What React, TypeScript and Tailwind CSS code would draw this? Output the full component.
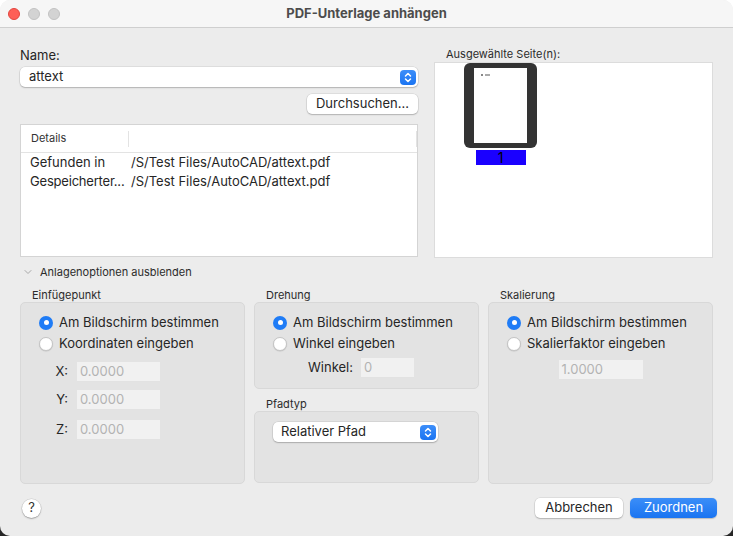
import type { ReactNode } from 'react';

const font = { fontFamily: 'Inter, "Liberation Sans", sans-serif' };

function Stepper() {
  return (
    <span className="flex h-[15px] w-[16px] items-center justify-center rounded-[4px] bg-[linear-gradient(#3d8ef9,#1a74f2)]">
      <svg width="8" height="11" viewBox="0 0 8 11" fill="none" stroke="white" strokeWidth="1.5" strokeLinecap="round" strokeLinejoin="round">
        <path d="M1.5 4 L4 1.5 L6.5 4" />
        <path d="M1.5 7 L4 9.5 L6.5 7" />
      </svg>
    </span>
  );
}

function Radio({ checked, label }: { checked?: boolean; label: string }) {
  return (
    <div className="flex h-[21px] items-center gap-[6px]">
      {checked ? (
        <span className="flex h-[14px] w-[14px] items-center justify-center rounded-full bg-[#1f7cf6]">
          <span className="h-[5px] w-[5px] rounded-full bg-white" />
        </span>
      ) : (
        <span className="h-[14px] w-[14px] rounded-full border border-[#c4c4c4] bg-white shadow-[0_0.5px_1px_rgba(0,0,0,0.15)]" />
      )}
      <span className="text-[13px] text-[#262626]">{label}</span>
    </div>
  );
}

function Field({ value, width }: { value: string; width: string }) {
  return (
    <div className={`flex h-[20px] items-center border-b border-[#e2e2e2] bg-[#f1f1f1] px-[3px] text-[13px] text-[#b3b3b3] ${width}`}>
      {value}
    </div>
  );
}

function Group({ title, children, className }: { title: string; children: ReactNode; className: string }) {
  return (
    <div className="flex flex-col">
      <div className="flex h-[14px] items-center pl-[12px] text-[11px] text-[#2b2b2b]">{title}</div>
      <div className={`rounded-[5px] border border-[#d8d8d8] bg-[#e3e3e3] ${className}`}>{children}</div>
    </div>
  );
}

export default function App() {
  return (
    <div className="h-[536px] w-[733px] bg-[linear-gradient(to_bottom,#ffffff_50%,#262626_50%)]" style={font}>
      <div className="flex h-full w-full flex-col overflow-hidden rounded-[10px] bg-[#ececec]">
        <div className="relative flex h-[28px] shrink-0 items-center justify-center border-b border-[#cfcfcf] bg-[#f6f6f6]">
          <div className="absolute left-[8px] top-[8px] flex gap-[8px]">
            <span className="h-[12px] w-[12px] rounded-full border border-[#e2463f] bg-[#fe5f57]" />
            <span className="h-[12px] w-[12px] rounded-full border border-[#c2c2c2] bg-[#d3d3d3]" />
            <span className="h-[12px] w-[12px] rounded-full border border-[#c2c2c2] bg-[#d3d3d3]" />
          </div>
          <span className="text-[13px] font-bold text-[#4c4c4c]">PDF-Unterlage anhängen</span>
        </div>

        <div className="flex flex-1 flex-col px-[20px] pt-[20px]">
          <div className="flex gap-[16px]">
            <div className="flex w-[398px] flex-col">
              <div className="flex h-[16px] items-center text-[13px] text-[#262626]">Name:</div>
              <div className="mt-[3px] flex h-[20px] items-center justify-between rounded-[5px] bg-white pl-[9px] pr-[2px] shadow-[0_0_0_0.5px_rgba(0,0,0,0.12),0_1px_1.5px_rgba(0,0,0,0.2)]">
                <span className="text-[13px] text-[#262626]">attext</span>
                <Stepper />
              </div>
              <div className="mt-[7px] flex justify-end">
                <button className="flex h-[20px] w-[111px] items-center justify-center rounded-[5px] bg-white text-[13px] text-[#262626] shadow-[0_0_0_0.5px_rgba(0,0,0,0.12),0_1px_1.5px_rgba(0,0,0,0.2)]">
                  Durchsuchen...
                </button>
              </div>
              <div className="mt-[10px] h-[133px] border border-[#d4d4d4] bg-white">
                <div className="flex h-[28px] items-center border-b border-[#e3e3e3]">
                  <div className="flex h-[16px] w-[108px] items-center border-r border-[#e3e3e3] pl-[10px] text-[11px] text-[#333]">Details</div>
                  <div className="flex-1" />
                  <div className="h-[16px] border-r border-[#e3e3e3]" />
                </div>
                <div className="flex h-[19px] items-center whitespace-nowrap text-[13px] text-[#262626]">
                  <span className="w-[110px] shrink-0 pl-[9px]">Gefunden in</span>
                  <span>/S/Test Files/AutoCAD/attext.pdf</span>
                </div>
                <div className="flex h-[19px] items-center whitespace-nowrap text-[13px] text-[#262626]">
                  <span className="w-[110px] shrink-0 pl-[9px] tracking-[-0.2px]">Gespeicherter...</span>
                  <span>/S/Test Files/AutoCAD/attext.pdf</span>
                </div>
              </div>
            </div>

            <div className="-mt-[1px] flex w-[279px] flex-col">
              <div className="flex h-[15px] items-center pl-[12px] text-[11px] text-[#2b2b2b]">Ausgewählte Seite(n):</div>
              <div className="h-[196px] border border-[#dcdcdc] bg-white pl-[29px]">
                <div className="flex w-[73px] flex-col items-center">
                  <div className="flex h-[85px] w-[73px] items-center justify-center rounded-[6px] bg-[#333333]">
                    <div className="h-[75px] w-[53px] bg-white pl-[7px] pt-[6px]">
                      <div className="flex gap-[2px]">
                        <span className="h-[2px] w-[2px] bg-[#888]" />
                        <span className="h-[2px] w-[5px] bg-[#aaa]" />
                      </div>
                    </div>
                  </div>
                  <div className="mt-[2px] flex h-[15px] w-[50px] items-center justify-center bg-[#1a00ff] text-[14px] leading-none text-black">1</div>
                </div>
              </div>
            </div>
          </div>

          <div className="mt-[7px] flex h-[14px] items-center">
            <svg className="ml-[4px]" width="8" height="6" viewBox="0 0 8 6" fill="none" stroke="#a8a8a8" strokeWidth="1" strokeLinecap="round">
              <path d="M1 1.5 L4 4.5 L7 1.5" />
            </svg>
            <span className="ml-[8px] text-[11px] text-[#2b2b2b]">Anlagenoptionen ausblenden</span>
          </div>

          <div className="mt-[9px] grid grid-cols-3 gap-[9px]">
            <Group title="Einfügepunkt" className="h-[182px] pl-[18px] pt-[9px]">
              <Radio checked label="Am Bildschirm bestimmen" />
              <Radio label="Koordinaten eingeben" />
              <div className="mt-[8px] flex flex-col">
                <div className="flex items-center">
                  <span className="w-[29px] text-right text-[13px] text-[#262626]">X:</span>
                  <span className="ml-[9px]"><Field value="0.0000" width="w-[83px]" /></span>
                </div>
                <div className="mt-[8px] flex items-center">
                  <span className="w-[29px] text-right text-[13px] text-[#262626]">Y:</span>
                  <span className="ml-[9px]"><Field value="0.0000" width="w-[83px]" /></span>
                </div>
                <div className="mt-[10px] flex items-center">
                  <span className="w-[29px] text-right text-[13px] text-[#262626]">Z:</span>
                  <span className="ml-[9px]"><Field value="0.0000" width="w-[83px]" /></span>
                </div>
              </div>
            </Group>

            <div className="flex flex-col">
              <Group title="Drehung" className="h-[87px] pl-[18px] pt-[9px]">
                <Radio checked label="Am Bildschirm bestimmen" />
                <Radio label="Winkel eingeben" />
                <div className="mt-[4px] flex items-center pl-[35px]">
                  <span className="text-[13px] text-[#262626]">Winkel:</span>
                  <span className="ml-[8px]"><Field value="0" width="w-[53px]" /></span>
                </div>
              </Group>
              <div className="mt-[8px]">
                <Group title="Pfadtyp" className="h-[72px] pl-[18px] pt-[10px]">
                  <div className="flex h-[20px] w-[165px] items-center justify-between rounded-[5px] bg-white pl-[8px] pr-[2px] shadow-[0_0_0_0.5px_rgba(0,0,0,0.12),0_1px_1.5px_rgba(0,0,0,0.2)]">
                    <span className="text-[13px] text-[#262626]">Relativer Pfad</span>
                    <Stepper />
                  </div>
                </Group>
              </div>
            </div>

            <Group title="Skalierung" className="h-[182px] pl-[18px] pt-[9px]">
              <Radio checked label="Am Bildschirm bestimmen" />
              <Radio label="Skalierfaktor eingeben" />
              <div className="mt-[6px] flex justify-center pr-[18px]">
                <Field value="1.0000" width="w-[84px]" />
              </div>
            </Group>
          </div>

          <div className="mt-[14px] flex items-center justify-between">
            <button className="ml-[2px] flex h-[19px] w-[19px] items-center justify-center rounded-full bg-white text-[13px] text-[#333] shadow-[0_0_0_0.5px_rgba(0,0,0,0.15),0_1px_1.5px_rgba(0,0,0,0.25)]">
              ?
            </button>
            <div className="mr-[-4px] flex gap-[7px]">
              <button className="flex h-[20px] w-[88px] items-center justify-center rounded-[5px] bg-white text-[13px] text-[#262626] shadow-[0_0_0_0.5px_rgba(0,0,0,0.12),0_1px_1.5px_rgba(0,0,0,0.2)]">
                Abbrechen
              </button>
              <button className="flex h-[20px] w-[87px] items-center justify-center rounded-[5px] bg-[linear-gradient(#3b8ef8,#1a74f1)] text-[13px] text-white shadow-[0_0.5px_1px_rgba(0,0,0,0.2)]">
                Zuordnen
              </button>
            </div>
          </div>
        </div>
      </div>
    </div>
  );
}
